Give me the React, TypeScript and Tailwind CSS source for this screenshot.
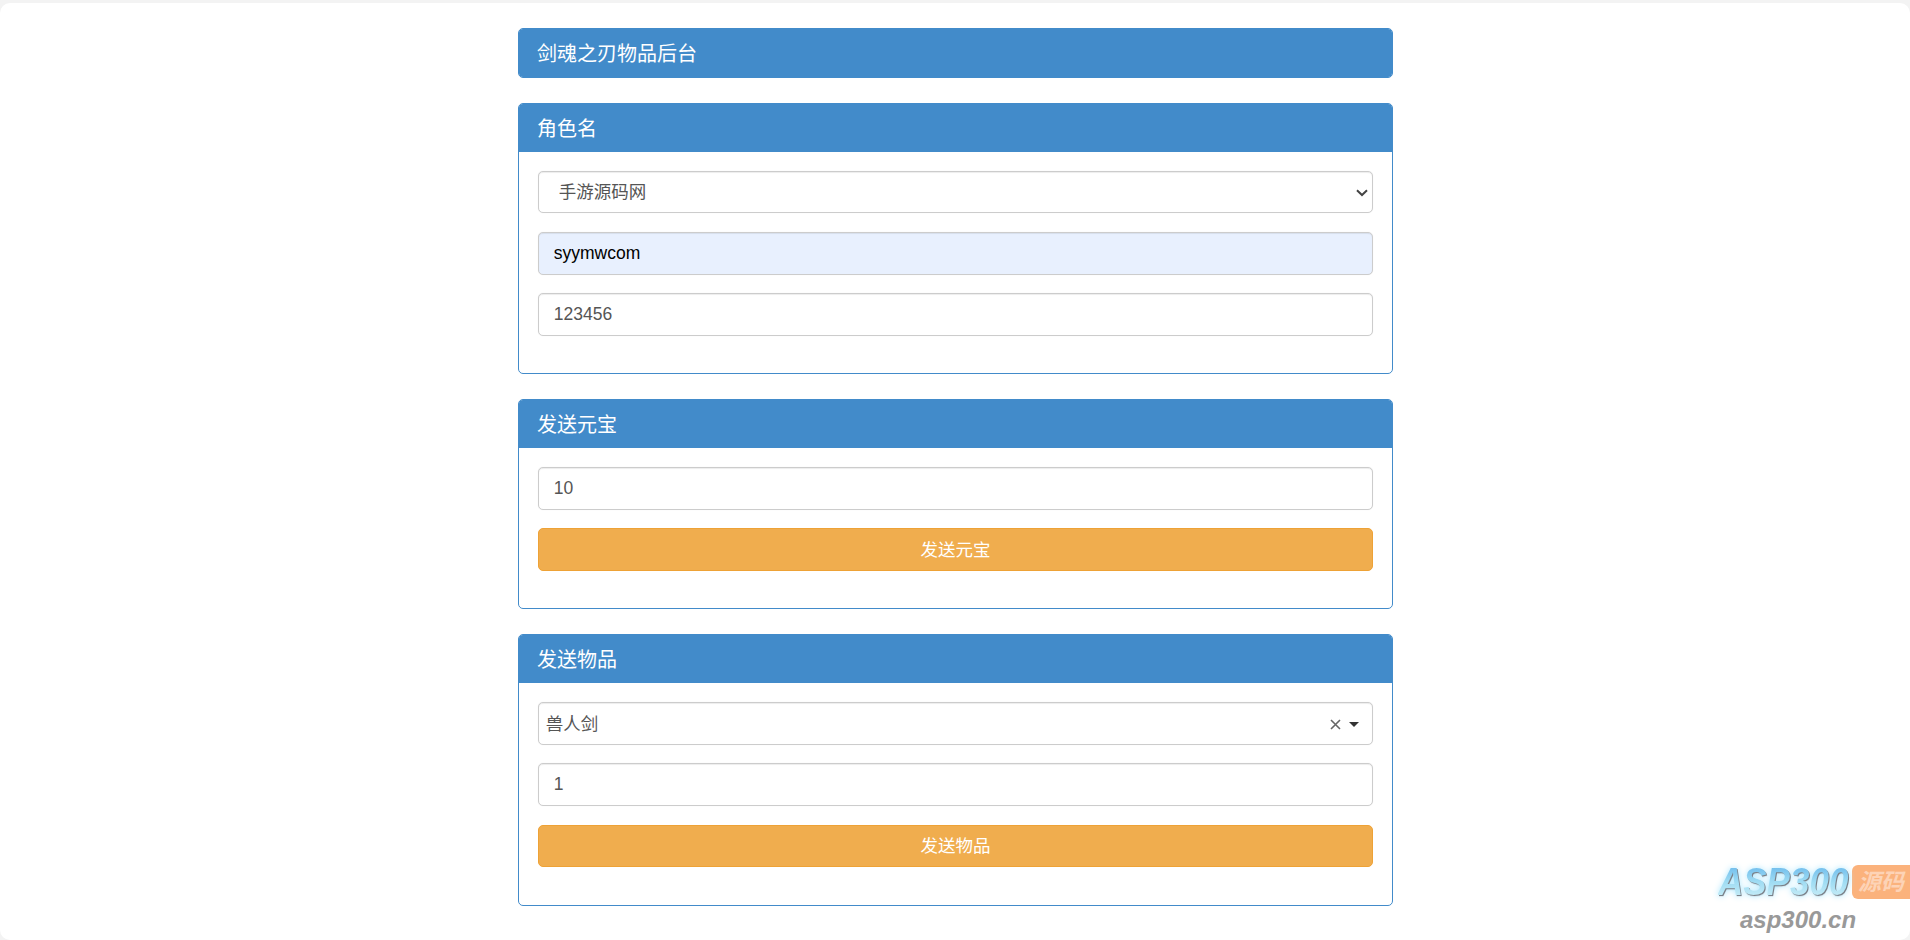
const font = `font-['Liberation_Sans','Noto_Sans_CJK_SC',sans-serif]`

const fieldBase =
    "block w-full h-[42.5px] mb-[18.75px] text-[17.5px] border border-[#ccc] rounded-[5px] shadow-[inset_0_1px_1px_rgba(0,0,0,0.075),0_0_1px_rgba(0,0,0,0.1)] outline-none"
const inputClass = `${fieldBase} px-[15px] text-[#555] bg-white`

function Panel({ title, children }: { title: string; children?: React.ReactNode }) {
    return (
        <div className="mb-[25px] bg-white border border-[#428bca] rounded-[5px] overflow-hidden">
            <div className="px-[18px] pt-[14px] pb-[12px] bg-[#428bca] text-white">
                <h3 className="text-[20px] leading-[22px]">{title}</h3>
            </div>
            {children && <div className="p-[18.75px]">{children}</div>}
        </div>
    )
}

function SendButton({ label }: { label: string }) {
    return (
        <button className="block w-full h-[42.5px] mb-[18.75px] pt-[1px] text-[17.5px] text-white bg-[#f0ad4e] border border-[#eea236] rounded-[5px]">
            {label}
        </button>
    )
}

function RoleSelect() {
    return (
        <div className="relative">
            <select className={`${fieldBase} appearance-none pl-[20px] pr-[30px] text-[#555] bg-white`}>
                <option>手游源码网</option>
            </select>
            <svg className="absolute right-[5px] top-[18px]" width="12" height="8" viewBox="0 0 12 8">
                <path d="M1 1.2 L6 6 L11 1.2" stroke="#444" strokeWidth="2" fill="none" />
            </svg>
        </div>
    )
}

// select2 style picker with clear cross and caret
function ItemPicker() {
    return (
        <div className={`${fieldBase} flex items-center pl-[7px] pr-[13px] pt-[2px] text-[#555] bg-white`}>
            <span className="flex-1">兽人剑</span>
            <svg className="mr-[8px]" width="11" height="11" viewBox="0 0 11 11">
                <path d="M1 1 L10 10 M10 1 L1 10" stroke="#666" strokeWidth="1.6" fill="none" />
            </svg>
            <svg width="10" height="5" viewBox="0 0 10 5">
                <path d="M0 0 H10 L5 5 Z" fill="#333" />
            </svg>
        </div>
    )
}

function Watermark() {
    return (
        <div className="absolute right-0 bottom-[6px] w-[192px] select-none whitespace-nowrap">
            <div className="flex items-center">
                <span className="w-[134px] origin-left scale-y-[1.12] text-[35px] leading-[36px] font-bold italic text-transparent bg-gradient-to-b from-[#62b4ea] via-[#9fdcf3] to-[#d2f1f8] bg-clip-text [filter:drop-shadow(1px_1px_0_#7a8088)_drop-shadow(0_0_3px_#aee8ff)]">
                    ASP300
                </span>
                <span className="flex items-center justify-center w-[58px] h-[34px] rounded-l-[6px] bg-[#fbb27c] text-[#fdd3b6] text-[23px] font-bold italic leading-none">
                    源码
                </span>
            </div>
            <div className="mt-[6px] pl-[22px] text-[24px] leading-[28px] font-bold italic text-[#999]">asp300.cn</div>
        </div>
    )
}

export default function App() {
    return (
        <div className={`relative h-[940px] overflow-hidden bg-[#f3f3f3] pt-[3px] ${font}`}>
            <div className="h-full bg-white rounded-[10px] pt-[25px]">
                <div className="w-[876px] pl-[1px] mx-auto">
                    <Panel title="剑魂之刃物品后台" />
                    <Panel title="角色名">
                        <RoleSelect />
                        <input className={`${fieldBase} px-[15px] text-black bg-[#e8f0fe]`} defaultValue="syymwcom" />
                        <input className={inputClass} defaultValue="123456" />
                    </Panel>
                    <Panel title="发送元宝">
                        <input className={inputClass} defaultValue="10" />
                        <SendButton label="发送元宝" />
                    </Panel>
                    <Panel title="发送物品">
                        <ItemPicker />
                        <input className={inputClass} defaultValue="1" />
                        <SendButton label="发送物品" />
                    </Panel>
                </div>
            </div>
            <Watermark />
        </div>
    )
}
